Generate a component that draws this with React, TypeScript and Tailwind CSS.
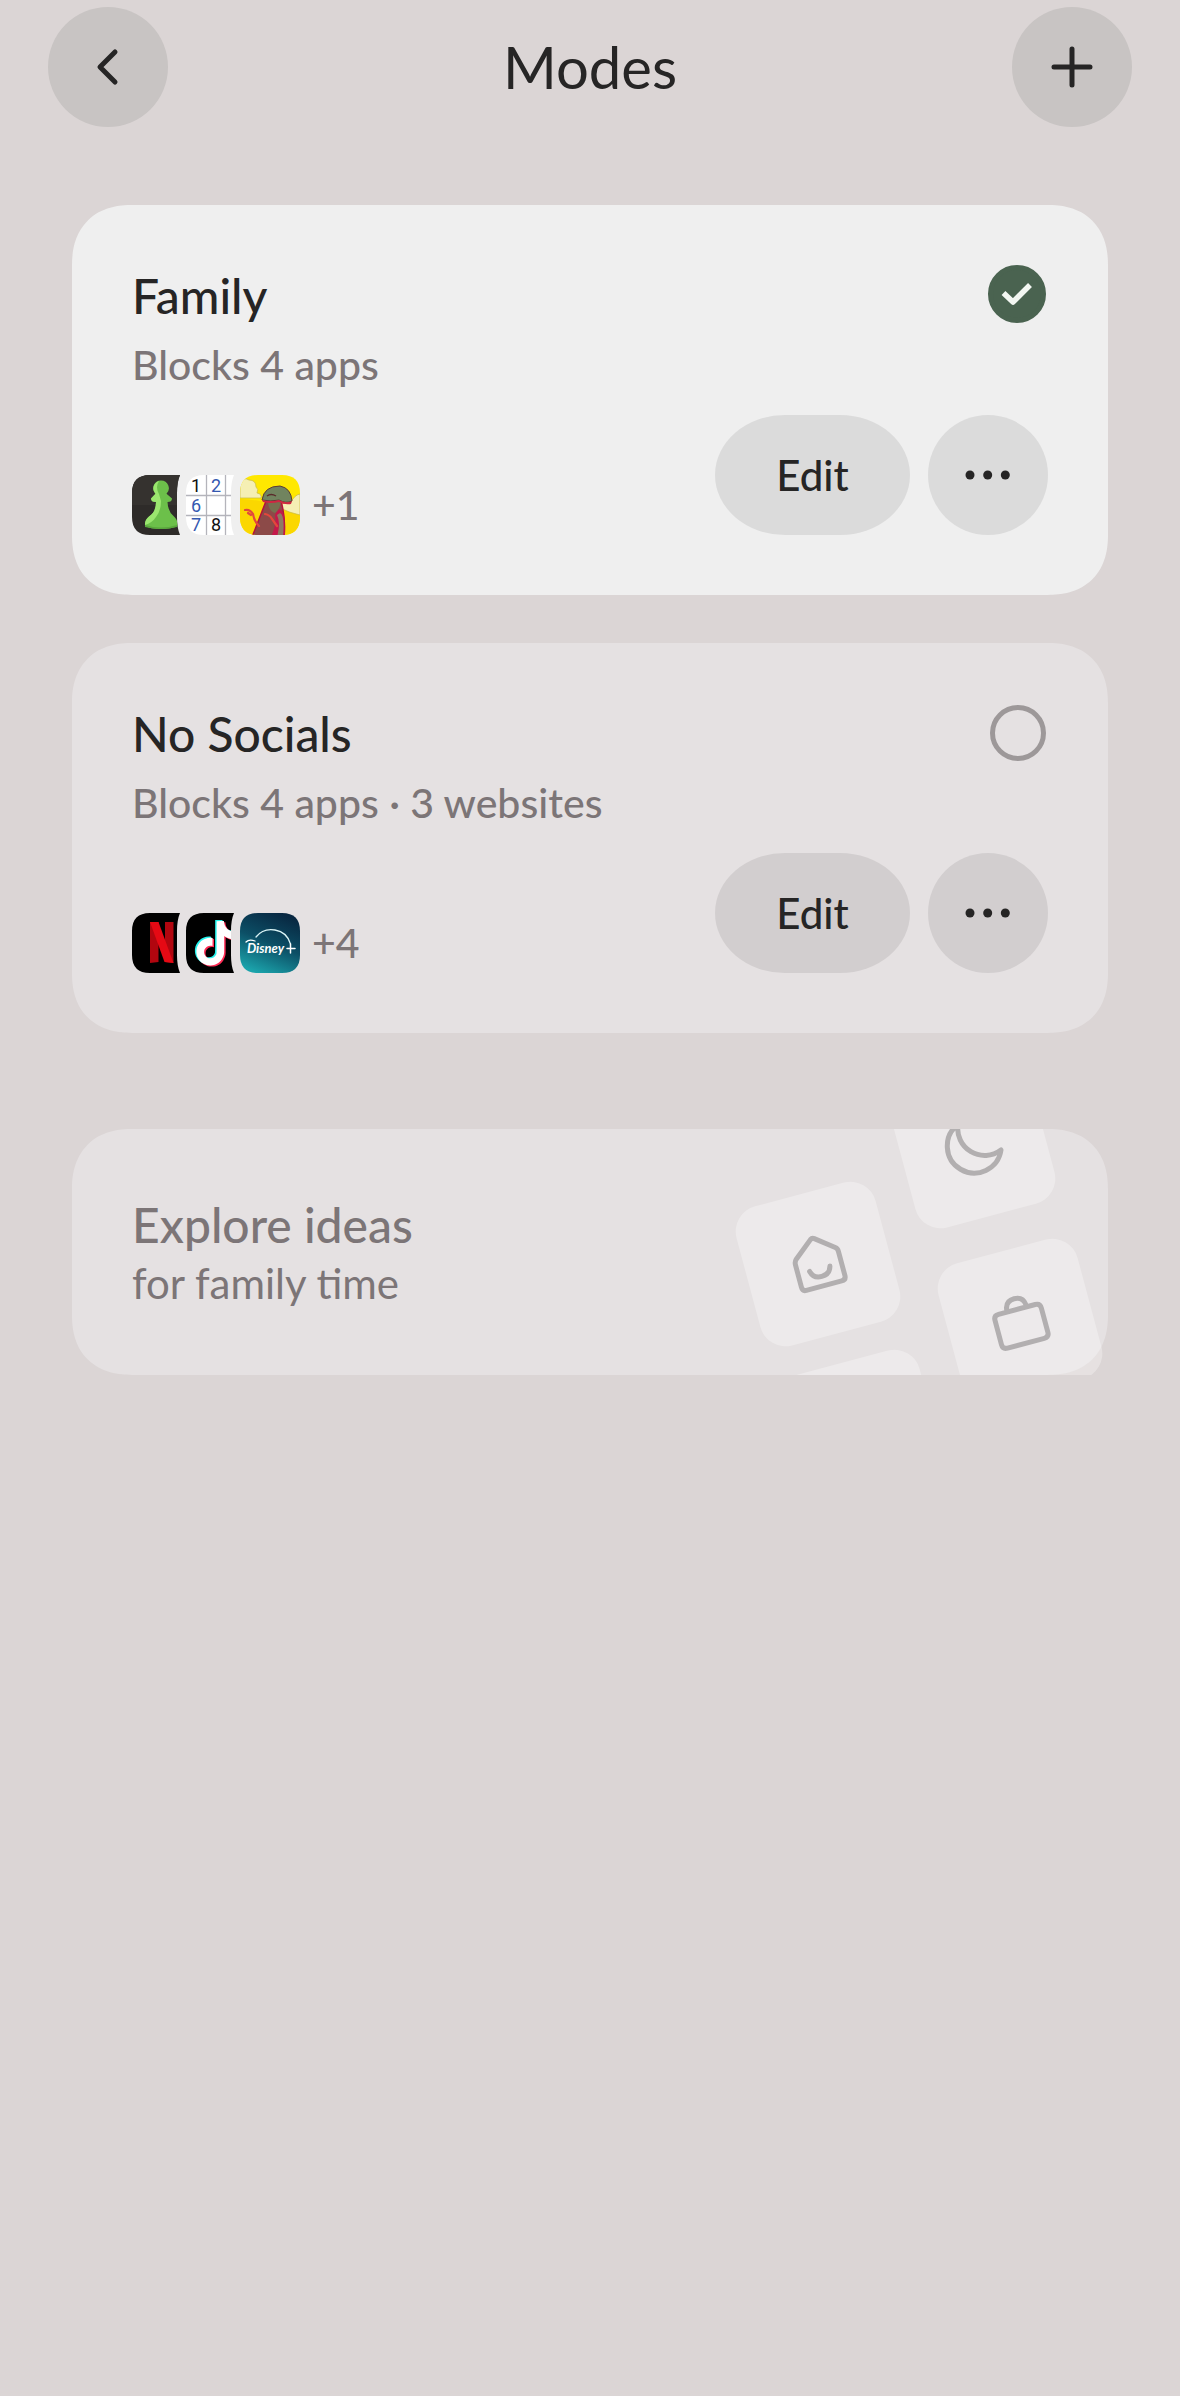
import React, { useState } from "react";

const NOTCHED = "M18 0 H48 Q45 7 45 18 V42 Q45 53 48 60 H18 Q0 60 0 42 V18 Q0 0 18 0 Z";
const FULL = "M18 0 H42 Q60 0 60 18 V42 Q60 60 42 60 H18 Q0 60 0 42 V18 Q0 0 18 0 Z";

const NOTE =
  "M12.525.02c1.31-.02 2.61-.01 3.91-.02.08 1.53.63 3.09 1.75 4.17 1.12 1.11 2.7 1.62 4.24 1.79v4.03c-1.44-.05-2.89-.35-4.2-.97-.57-.26-1.1-.59-1.62-.93-.01 2.92.01 5.84-.02 8.75-.08 1.4-.54 2.79-1.35 3.94-1.31 1.92-3.58 3.17-5.91 3.21-1.43.08-2.86-.31-4.08-1.03-2.02-1.19-3.44-3.37-3.65-5.71-.02-.5-.03-1-.01-1.49.18-1.9 1.12-3.72 2.58-4.96 1.66-1.44 3.98-2.13 6.15-1.72.02 1.48-.04 2.96-.04 4.44-.99-.32-2.15-.23-3.02.37-.63.41-1.11 1.04-1.36 1.75-.21.51-.15 1.07-.14 1.61.24 1.64 1.82 3.02 3.5 2.87 1.12-.01 2.19-.66 2.77-1.61.19-.33.4-.67.41-1.06.1-1.79.06-3.57.07-5.36.01-4.03-.01-8.05.02-12.07z";

const AppIcon = ({ id, last = false, children }: { id: string; last?: boolean; children: React.ReactNode }) => (
  <svg
    className={last ? "h-[60px] w-[60px]" : "h-[60px] w-[54px]"}
    viewBox={last ? "0 0 60 60" : "0 0 54 60"}
    aria-hidden="true"
  >
    <defs>
      <clipPath id={id}>
        <path d={last ? FULL : NOTCHED} />
      </clipPath>
    </defs>
    <g clipPath={`url(#${id})`}>{children}</g>
  </svg>
);

const ChessIcon = () => (
  <AppIcon id="chess">
    <rect width="60" height="60" fill="#2e2b29" />
    <rect width="60" height="30" fill="#35322f" />
    <path
      d="M29 5.500 a7.700 7.700 0 0 1 5.500 13.200 L40 23.500 Q40 27 35.500 27 Q36 37 42 41.500 Q46 45 45.500 51 Q40 54 29 54 Q18 54 13 51 Q12.500 45 17 41.500 Q24 37 24 27 Q19 27 19 23.500 L23.500 18.700 A7.700 7.700 0 0 1 29 5.500 Z"
      fill="#6cc04a"
    />
    <path
      d="M27 6 a7.700 7.700 0 0 0 -3.500 12.700 L19 23.500 Q19 27 24 27 Q24 37 17 41.500 Q12.500 45 13 50 Q20 48 24 42 Q29 36 29 26 L27 19 Q23 12 27 6 Z"
      fill="#9be66f"
    />
    <path d="M13 50 Q29 55 45 50 V52 Q29 56 13 52 Z" fill="#5aa83d" />
  </AppIcon>
);

const SudokuIcon = () => (
  <AppIcon id="sudoku">
    <rect width="60" height="60" fill="#fff" />
    <path d="M0 20.500 H54 M0 40.500 H54 M20.500 0 V60 M39.500 0 V60" stroke="#b4b4bb" strokeWidth="1.300" />
    <g fontFamily="Roboto, sans-serif" fontSize="18" textAnchor="middle">
      <text x="10" y="17" fill="#111">1</text>
      <text x="30" y="17" fill="#3558b0">2</text>
      <text x="10" y="37" fill="#3558b0">6</text>
      <text x="10" y="56" fill="#3558b0">7</text>
      <text x="30" y="56" fill="#111">8</text>
    </g>
  </AppIcon>
);

const MushroomIcon = () => (
  <AppIcon id="mushroom" last>
    <rect width="60" height="60" fill="#ffe800" />
    <path d="M0 24 Q30 25 60 38 V60 H0 Z" fill="#fbd700" />
    <path
      d="M0 6 Q4 2 9 5 Q16 5 16 12 Q19 14 17 18 Q22 19 21 23 H0 Z"
      fill="#f5efb4"
      stroke="#c9b93f"
      strokeWidth=".700"
    />
    <path
      d="M40 31 Q46 25 50 29 Q54 20 60 19 V40 Q50 38 40 33 Z"
      fill="#f5efb4"
      stroke="#c9b93f"
      strokeWidth=".700"
    />
    <path d="M26 26 Q20 42 12 62 H44 Q46 44 41 26 Z" fill="#8c4a48" stroke="#b3123c" strokeWidth="1.500" />
    <path d="M37 36 Q41 31 44 41 L45 62 H31 Q37 48 35 40 Z" fill="#c4184a" />
    <path d="M40 38 Q45 40 43 62 H37 Q41 48 37 40 Z" fill="#8f7a62" />
    <path d="M28 25 L41 25 Q40 35 35 38 Q28 36 28 25 Z" fill="#77704f" />
    <path d="M22 25 Q24 11 40 11 Q51 13 52 26 Q46 29 39 25 Q31 27 22 25 Z" fill="#71845f" stroke="#5a3b35" strokeWidth="1" />
    <path d="M22 25 Q31 27 39 25 Q46 29 52 26 L51 29 Q44 30 39 27 Q31 29 23 27 Z" fill="#cf2742" />
    <path d="M27 21 Q31 18 36 21" fill="none" stroke="#5a2b2b" strokeWidth="1.400" />
    <path
      d="M5 35 Q10 34 13 39 Q14 46 19 51 M8 38 L11 40 M25 39 Q30 40 32 44 L37 51"
      fill="none"
      stroke="#e2473c"
      strokeWidth="2.200"
      strokeLinecap="round"
    />
  </AppIcon>
);

const NetflixIcon = () => (
  <AppIcon id="netflix">
    <rect width="60" height="60" fill="#000" />
    <path d="M18 9 H26.500 V49 L18 50 Z M33 9 H41.500 V50 L33 49 Z" fill="#b1060f" />
    <path d="M18 9 H26.500 L41.500 50 L32.500 49 Z" fill="#e50914" />
  </AppIcon>
);

const TiktokIcon = () => (
  <AppIcon id="tiktok">
    <rect width="60" height="60" fill="#000" />
    <g transform="translate(6 7) scale(1.850)">
      <path d={NOTE} fill="#25f4ee" />
      <path d={NOTE} fill="#fe2c55" transform="translate(1.600 1.200)" />
      <path d={NOTE} fill="#fff" transform="translate(.800 .600)" />
    </g>
  </AppIcon>
);

const DisneyIcon = () => (
  <AppIcon id="disney" last>
    <defs>
      <linearGradient id="disney-bg" x1=".7" y1="0" x2=".3" y2="1">
        <stop offset="0" stopColor="#082741" />
        <stop offset=".5" stopColor="#0c4f66" />
        <stop offset="1" stopColor="#1ba3ab" />
      </linearGradient>
    </defs>
    <rect width="60" height="60" fill="url(#disney-bg)" />
    <path d="M16 24 Q23 15 35 17 Q47 19 50.500 31" fill="none" stroke="#d9f3f5" strokeWidth="1.300" strokeLinecap="round" />
    <path d="M6 29 Q9 26 15 28" fill="none" stroke="#fff" strokeWidth="1.300" strokeLinecap="round" />
    <text x="7" y="40" fill="#fff" fontFamily="Lato, sans-serif" fontSize="13" fontStyle="italic" fontWeight="700">
      Disney
    </text>
    <path d="M50.500 31 V40 M47 35.500 H55" stroke="#fff" strokeWidth="1.500" strokeLinecap="round" />
  </AppIcon>
);

const modes = [
  {
    id: "family",
    name: "Family",
    summary: "Blocks 4 apps",
    more: "+1",
    icons: [ChessIcon, SudokuIcon, MushroomIcon],
  },
  {
    id: "no-socials",
    name: "No Socials",
    summary: "Blocks 4 apps · 3 websites",
    more: "+4",
    icons: [NetflixIcon, TiktokIcon, DisneyIcon],
  },
];

const ModeCard = ({ mode, active, onSelect }: { mode: any; active: boolean; onSelect: () => void }) => {
  const buttonColor = active ? "bg-[#dbdbdb]" : "bg-[#d2cecf]";

  return (
    <section
      className={`rounded-[60px] p-[60px] [corner-shape:superellipse(1.2)] ${active ? "bg-[#efefef]" : "bg-[#e5e1e2]"}`}
    >
      <div className="flex items-start justify-between">
        <div>
          <h2 className="text-[48px] leading-[62px] font-medium">
            <label htmlFor={mode.id}>{mode.name}</label>
          </h2>
          <p className="mt-2 text-[41px] leading-[60px] font-medium text-[#7c7577]">{mode.summary}</p>
        </div>
        <div className="grid h-[60px] w-[60px]">
          <input
            id={mode.id}
            type="radio"
            name="mode"
            checked={active}
            onChange={onSelect}
            className="col-start-1 row-start-1 m-[2px] h-14 w-14 appearance-none rounded-full border-[5px] border-[#9d9899] checked:m-0 checked:h-[58px] checked:w-[58px] checked:border-[#4a6350] checked:bg-[#4a6350]"
          />
          {active && (
            <svg className="pointer-events-none col-start-1 row-start-1 h-[58px] w-[58px]" viewBox="0 0 58 58" aria-hidden="true">
              <path d="M15.500 28 L25 37 L42 20" fill="none" stroke="#f3f7f2" strokeWidth="5.500" strokeLinejoin="round" />
            </svg>
          )}
        </div>
      </div>

      <div className="mt-5 flex items-end justify-between">
        <div className="flex items-center">
          {mode.icons.map((Icon: any, i: number) => (
            <Icon key={i} />
          ))}
          <span className="ml-3 text-[41px] leading-[60px] font-medium text-[#7c7577]">{mode.more}</span>
        </div>
        <div className="flex gap-[18px]">
          <button
            type="button"
            className={`h-[120px] min-w-[195px] rounded-[70px/60px] px-12 text-[42px] font-medium ${buttonColor}`}
          >
            Edit
          </button>
          <button type="button" aria-label={`More options for ${mode.name}`} className={`h-[120px] w-[120px] rounded-full ${buttonColor}`}>
            <svg viewBox="0 0 120 120" fill="currentColor">
              <circle cx="42" cy="60" r="4.500" />
              <circle cx="59.700" cy="60" r="4.500" />
              <circle cx="77.300" cy="60" r="4.500" />
            </svg>
          </button>
        </div>
      </div>
    </section>
  );
};

// Tilted tiles on the right of the ideas card
const IdeaTiles = () => (
  <svg className="absolute top-0 right-0 h-[246px] w-[440px]" viewBox="0 0 440 246" aria-hidden="true">
    <g fill="#fff" fillOpacity=".3">
      <rect x="-72" y="-72" width="144" height="144" rx="26" transform="translate(150 135) rotate(-15)" />
      <rect x="-72" y="-72" width="144" height="144" rx="26" transform="translate(352 192) rotate(-15)" />
      <rect x="-72" y="-72" width="144" height="144" rx="26" transform="translate(305 17) rotate(-15)" />
      <rect x="-72" y="-72" width="144" height="144" rx="26" transform="translate(194 303) rotate(-15)" />
    </g>
    <g fill="none" stroke="#b2afb0" strokeWidth="5" strokeLinecap="round" strokeLinejoin="round">
      {/* Home */}
      <path
        transform="translate(150 135) rotate(-15)"
        d="M-1 -25.500 Q1 -27 3 -25.500 L21 -11.500 Q23 -10 23 -7 V18 Q23 22.500 18.500 22.500 H-18 Q-22 22.500 -22 18 V-5 Q-22 -8 -20 -10 Z M-10 5 Q-8 13 0.500 13 Q9 13 11 5"
      />
      {/* Briefcase */}
      <path
        transform="translate(352 192) rotate(-15)"
        d="M-19 -12 H19 Q24 -12 24 -7 V18 Q24 23 19 23 H-19 Q-24 23 -24 18 V-7 Q-24 -12 -19 -12 Z M-10 -12 V-14 Q-9 -23 0 -23 Q9 -23 10 -14 V-12"
      />
      {/* Moon */}
      <path transform="translate(305 16)" d="M28 5 A27 27 0 1 1 -15 -20.500 A27 27 0 0 0 28 5 Z" />
    </g>
  </svg>
);

const App = () => {
  const [activeMode, setActiveMode] = useState("family");

  return (
    <div className="min-h-screen bg-[#dbd5d5] font-[Lato,sans-serif] text-[#262525]">
      <header className="flex items-center justify-between px-12 pt-[7px]">
        <button type="button" aria-label="Back" className="h-[120px] w-[120px] rounded-full bg-[#c8c4c3]">
          <svg viewBox="0 0 120 120" fill="none" stroke="currentColor" strokeWidth="5" strokeLinecap="round" strokeLinejoin="round">
            <path d="M67 45 L52 60 L67 75" />
          </svg>
        </button>
        <h1 className="text-[58px] leading-[72px]">Modes</h1>
        <button type="button" aria-label="Add mode" className="h-[120px] w-[120px] rounded-full bg-[#c8c4c3]">
          <svg viewBox="0 0 120 120" fill="none" stroke="currentColor" strokeWidth="5" strokeLinecap="round">
            <path d="M60 42 V78 M42 60 H78" />
          </svg>
        </button>
      </header>

      <main className="px-[72px] pt-[78px]">
        <div className="flex flex-col gap-12">
          {modes.map((mode) => (
            <ModeCard
              key={mode.id}
              mode={mode}
              active={mode.id === activeMode}
              onSelect={() => setActiveMode(mode.id)}
            />
          ))}
        </div>

        {/* Ideas */}
        <a
          href="#ideas"
          className="relative mt-24 block rounded-[60px] bg-[#e5e1e2] px-[60px] pt-[67px] pb-[63px] leading-[58px] text-[#7c7577] [corner-shape:superellipse(1.2)]"
        >
          <IdeaTiles />
          <span className="relative block text-[48px] font-medium">Explore ideas</span>
          <span className="relative block text-[42px]">for family time</span>
        </a>
      </main>
    </div>
  );
};

export default App;
